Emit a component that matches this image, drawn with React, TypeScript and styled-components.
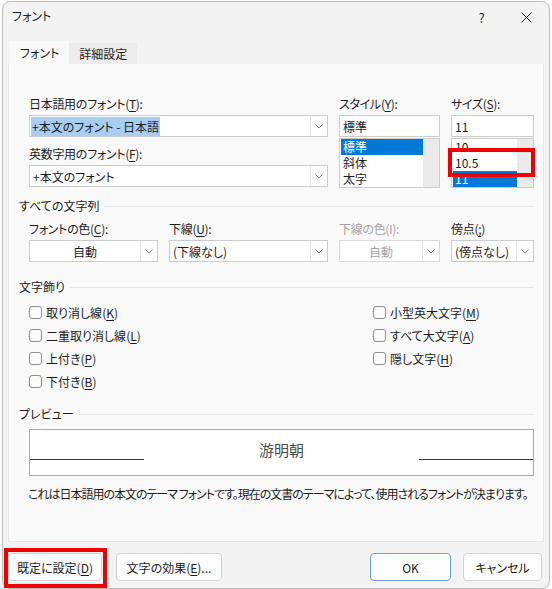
import React from "react"
import styled, { createGlobalStyle } from "styled-components"

const GlobalStyle = createGlobalStyle`
    html, body {
        margin: 0;
        padding: 0;
        background: #ffffff;
    }
    body {
        font-family: "Noto Sans CJK JP", "Noto Sans", sans-serif;
        font-size: 12px;
        color: #1b1b1b;
        font-feature-settings: "palt";
    }
`

const SWindow = styled.div`
    box-sizing: border-box;
    width: 548px;
    height: 588px;
    margin: 1px 0 0 2px;
    background: #f3f3f3;
    border: 1px solid #bdbdbd;
    border-radius: 8px;
    display: flex;
    flex-direction: column;
`

const STitleBar = styled.div`
    height: 39px;
    display: flex;
    align-items: flex-start;
`

const STitle = styled.div`
    flex: 1;
    padding: 6px 0 0 9px;
    line-height: 16px;
`

const STitleButton = styled.div`
    width: 45px;
    height: 30px;
    display: flex;
    align-items: center;
    justify-content: center;
    font-size: 13px;
    color: #1b1b1b;
`

const STabs = styled.div`
    display: flex;
    align-items: flex-end;
    height: 23px;
    margin-left: 7px;
`

const STab = styled.div<{ $active?: boolean }>`
    box-sizing: border-box;
    height: ${({ $active }) => ($active ? "23px" : "21px")};
    padding: 0 10px;
    display: flex;
    align-items: center;
    background: ${({ $active }) => ($active ? "#f9f9f9" : "#ececec")};
`

const SPanel = styled.div`
    box-sizing: border-box;
    height: 478px;
    margin: 0 5px 0 5px;
    padding: 32px 8px 0 10px;
    background: #f9f9f9;
    border: 1px solid #e6e6e6;
    border-top: none;
    display: flex;
    flex-direction: column;
`

const STopGroup = styled.div`
    display: grid;
    grid-template-columns: 299px 101px 83px;
    column-gap: 11px;
    margin-left: 10px;
`

const SColumn = styled.div`
    position: relative;
    display: flex;
    flex-direction: column;
`

const SLabel = styled.div<{ $disabled?: boolean; $gap?: number }>`
    line-height: 16px;
    height: 16px;
    margin-top: ${({ $gap }) => $gap ?? 0}px;
    margin-bottom: 3px;
    white-space: nowrap;
    letter-spacing: -0.3px;
    color: ${({ $disabled }) => ($disabled ? "#a3a3a3" : "#1b1b1b")};
`

const SAcc = styled.span`
    text-decoration: underline;
    text-underline-offset: 2px;
`

const SCombo = styled.div<{ $disabled?: boolean }>`
    box-sizing: border-box;
    height: 22px;
    display: flex;
    background: #ffffff;
    border: 1px solid ${({ $disabled }) => ($disabled ? "#dadada" : "#cccccc")};
`

const SComboText = styled.div<{ $center?: boolean; $disabled?: boolean }>`
    flex: 1;
    display: flex;
    align-items: center;
    justify-content: ${({ $center }) => ($center ? "center" : "flex-start")};
    padding-left: ${({ $center }) => ($center ? "0" : "3px")};
    white-space: nowrap;
    overflow: hidden;
    color: ${({ $disabled }) => ($disabled ? "#a3a3a3" : "#1b1b1b")};
`

const SSelected = styled.span`
    display: inline-block;
    line-height: 19px;
    margin-left: -2px;
    padding: 0 1px;
    background: #a8cdf1;
`

const SComboArrow = styled.div`
    width: 16px;
    border-left: 1px solid #e3e3e3;
    display: flex;
    align-items: center;
    justify-content: center;
`

const SList = styled.div`
    box-sizing: border-box;
    height: 50px;
    margin-top: 1px;
    display: flex;
    background: #ffffff;
    border: 1px solid #cccccc;
    overflow: hidden;
`

const SListItems = styled.div`
    flex: 1;
    padding-left: 1px;
`

const SListItem = styled.div<{ $selected?: boolean }>`
    height: 16px;
    line-height: 16px;
    padding-left: 2px;
    background: ${({ $selected }) => ($selected ? "#0078d7" : "transparent")};
    color: ${({ $selected }) => ($selected ? "#ffffff" : "#1b1b1b")};
`

const SScrollTrack = styled.div`
    width: 16px;
    background: #eaeaea;
`

const SRedFrame = styled.div<{ $top: number; $left: number; $width: number; $height: number }>`
    position: absolute;
    top: ${({ $top }) => $top}px;
    left: ${({ $left }) => $left}px;
    width: ${({ $width }) => $width}px;
    height: ${({ $height }) => $height}px;
    box-sizing: border-box;
    border: 4px solid #ee0000;
    pointer-events: none;
`

const SSection = styled.div<{ $gap: number }>`
    display: flex;
    align-items: center;
    height: 16px;
    line-height: 16px;
    margin-top: ${({ $gap }) => $gap}px;
`

const SSectionLine = styled.div`
    flex: 1;
    height: 1px;
    margin: 0 1px 0 5px;
    background: #e6e6e6;
`

const SAllRow = styled.div`
    display: grid;
    grid-template-columns: 129px 159px 101px 83px;
    column-gap: 11px;
    margin: 7px 0 0 10px;
`

const SChecks = styled.div`
    display: grid;
    grid-template-columns: 344px auto;
    grid-auto-rows: 23px;
    margin: 6px 0 0 10px;
`

const SCheckRow = styled.div`
    display: flex;
    align-items: center;
    white-space: nowrap;
`

const SCheckBox = styled.span`
    box-sizing: border-box;
    width: 13px;
    height: 13px;
    margin-right: 4px;
    border: 1px solid #8d8d8d;
    border-radius: 3px;
    background: #fbfbfb;
`

const SPreview = styled.div`
    box-sizing: border-box;
    width: 505px;
    height: 47px;
    margin: 7px 0 0 10px;
    background: #ffffff;
    border: 1px solid #a9a9a9;
    display: grid;
    grid-template-columns: 114px 1fr 114px;
`

const SPreviewLine = styled.div`
    align-self: end;
    margin-bottom: 15px;
    border-top: 1px solid #3a3a3a;
`

const SPreviewText = styled.div`
    align-self: center;
    text-align: center;
    font-size: 15px;
    color: #4a4a4a;
    margin-top: -6px;
`

const SNote = styled.div`
    margin: 10px 0 0 9px;
    line-height: 16px;
    white-space: nowrap;
    letter-spacing: -1px;
`

const SButtonRow = styled.div`
    display: flex;
    align-items: center;
    margin-top: 11px;
    padding: 0 7px 0 5px;
`

const SButtonGroup = styled.div<{ $gap: number }>`
    display: flex;
    gap: ${({ $gap }) => $gap}px;
`

const SSpacer = styled.div`
    flex: 1;
`

const SButton = styled.div<{ $width: number; $primary?: boolean }>`
    position: relative;
    box-sizing: border-box;
    width: ${({ $width }) => $width}px;
    height: 28px;
    display: flex;
    align-items: center;
    justify-content: center;
    background: #fdfdfd;
    border: 1px solid ${({ $primary }) => ($primary ? "#6f9fd6" : "#d3d3d3")};
    border-radius: 4px;
    white-space: nowrap;
`

const Chevron = () => (
    <svg width="8" height="5" viewBox="0 0 8 5">
        <path d="M0.5 0.5 L4 4 L7.5 0.5" fill="none" stroke="#8a8a8a" strokeWidth="1" />
    </svg>
)

const Combo = ({ text, center, disabled, selected }: { text: string; center?: boolean; disabled?: boolean; selected?: boolean }) => (
    <SCombo $disabled={disabled}>
        <SComboText $center={center} $disabled={disabled}>
            {selected ? <SSelected>{text}</SSelected> : text}
        </SComboText>
        <SComboArrow>
            <Chevron />
        </SComboArrow>
    </SCombo>
)

const Check = ({ label, acc }: { label: string; acc: string }) => (
    <SCheckRow>
        <SCheckBox />
        {label}(<SAcc>{acc}</SAcc>)
    </SCheckRow>
)

export default function App() {
    return (
        <>
            <GlobalStyle />
            <SWindow>
                <STitleBar>
                    <STitle>フォント</STitle>
                    <STitleButton>?</STitleButton>
                    <STitleButton>
                        <svg width="11" height="11" viewBox="0 0 11 11">
                            <path d="M0.5 0.5 L10.5 10.5 M10.5 0.5 L0.5 10.5" stroke="#1b1b1b" strokeWidth="1" />
                        </svg>
                    </STitleButton>
                </STitleBar>

                <STabs>
                    <STab $active>フォント</STab>
                    <STab>詳細設定</STab>
                </STabs>

                <SPanel>
                    <STopGroup>
                        <SColumn>
                            <SLabel>日本語用のフォント(<SAcc>T</SAcc>):</SLabel>
                            <Combo text="+本文のフォント - 日本語" selected />
                            <SLabel $gap={9}>英数字用のフォント(<SAcc>F</SAcc>):</SLabel>
                            <Combo text="+本文のフォント" />
                        </SColumn>
                        <SColumn>
                            <SLabel>スタイル(<SAcc>Y</SAcc>):</SLabel>
                            <SCombo>
                                <SComboText>標準</SComboText>
                            </SCombo>
                            <SList>
                                <SListItems>
                                    <SListItem $selected>標準</SListItem>
                                    <SListItem>斜体</SListItem>
                                    <SListItem>太字</SListItem>
                                </SListItems>
                                <SScrollTrack />
                            </SList>
                        </SColumn>
                        <SColumn>
                            <SLabel>サイズ(<SAcc>S</SAcc>):</SLabel>
                            <SCombo>
                                <SComboText>11</SComboText>
                            </SCombo>
                            <SList>
                                <SListItems>
                                    <SListItem>10</SListItem>
                                    <SListItem>10.5</SListItem>
                                    <SListItem $selected>11</SListItem>
                                </SListItems>
                                <SScrollTrack />
                            </SList>
                            <SRedFrame $top={52} $left={-3} $width={87} $height={29} />
                        </SColumn>
                    </STopGroup>

                    <SSection $gap={10}>
                        すべての文字列
                        <SSectionLine />
                    </SSection>
                    <SAllRow>
                        <SColumn>
                            <SLabel>フォントの色(<SAcc>C</SAcc>):</SLabel>
                            <Combo text="自動" center />
                        </SColumn>
                        <SColumn>
                            <SLabel>下線(<SAcc>U</SAcc>):</SLabel>
                            <Combo text="(下線なし)" />
                        </SColumn>
                        <SColumn>
                            <SLabel $disabled>下線の色(I):</SLabel>
                            <Combo text="自動" center disabled />
                        </SColumn>
                        <SColumn>
                            <SLabel>傍点(<SAcc>;</SAcc>)</SLabel>
                            <Combo text="(傍点なし)" />
                        </SColumn>
                    </SAllRow>

                    <SSection $gap={17}>
                        文字飾り
                        <SSectionLine />
                    </SSection>
                    <SChecks>
                        <Check label="取り消し線" acc="K" />
                        <Check label="小型英大文字" acc="M" />
                        <Check label="二重取り消し線" acc="L" />
                        <Check label="すべて大文字" acc="A" />
                        <Check label="上付き" acc="P" />
                        <Check label="隠し文字" acc="H" />
                        <Check label="下付き" acc="B" />
                    </SChecks>

                    <SSection $gap={13}>
                        プレビュー
                        <SSectionLine />
                    </SSection>
                    <SPreview>
                        <SPreviewLine />
                        <SPreviewText>游明朝</SPreviewText>
                        <SPreviewLine />
                    </SPreview>
                    <SNote>
                        これは日本語用の本文のテーマ フォントです。現在の文書のテーマによって、使用されるフォントが決まります。
                    </SNote>
                </SPanel>

                <SButtonRow>
                    <SButtonGroup $gap={14}>
                        <SButton $width={94}>
                            既定に設定(<SAcc>D</SAcc>)
                            <SRedFrame $top={-6} $left={-5} $width={103} $height={40} />
                        </SButton>
                        <SButton $width={106}>
                            文字の効果(<SAcc>E</SAcc>)...
                        </SButton>
                    </SButtonGroup>
                    <SSpacer />
                    <SButtonGroup $gap={12}>
                        <SButton $width={81} $primary>OK</SButton>
                        <SButton $width={79}>キャンセル</SButton>
                    </SButtonGroup>
                </SButtonRow>
            </SWindow>
        </>
    )
}
